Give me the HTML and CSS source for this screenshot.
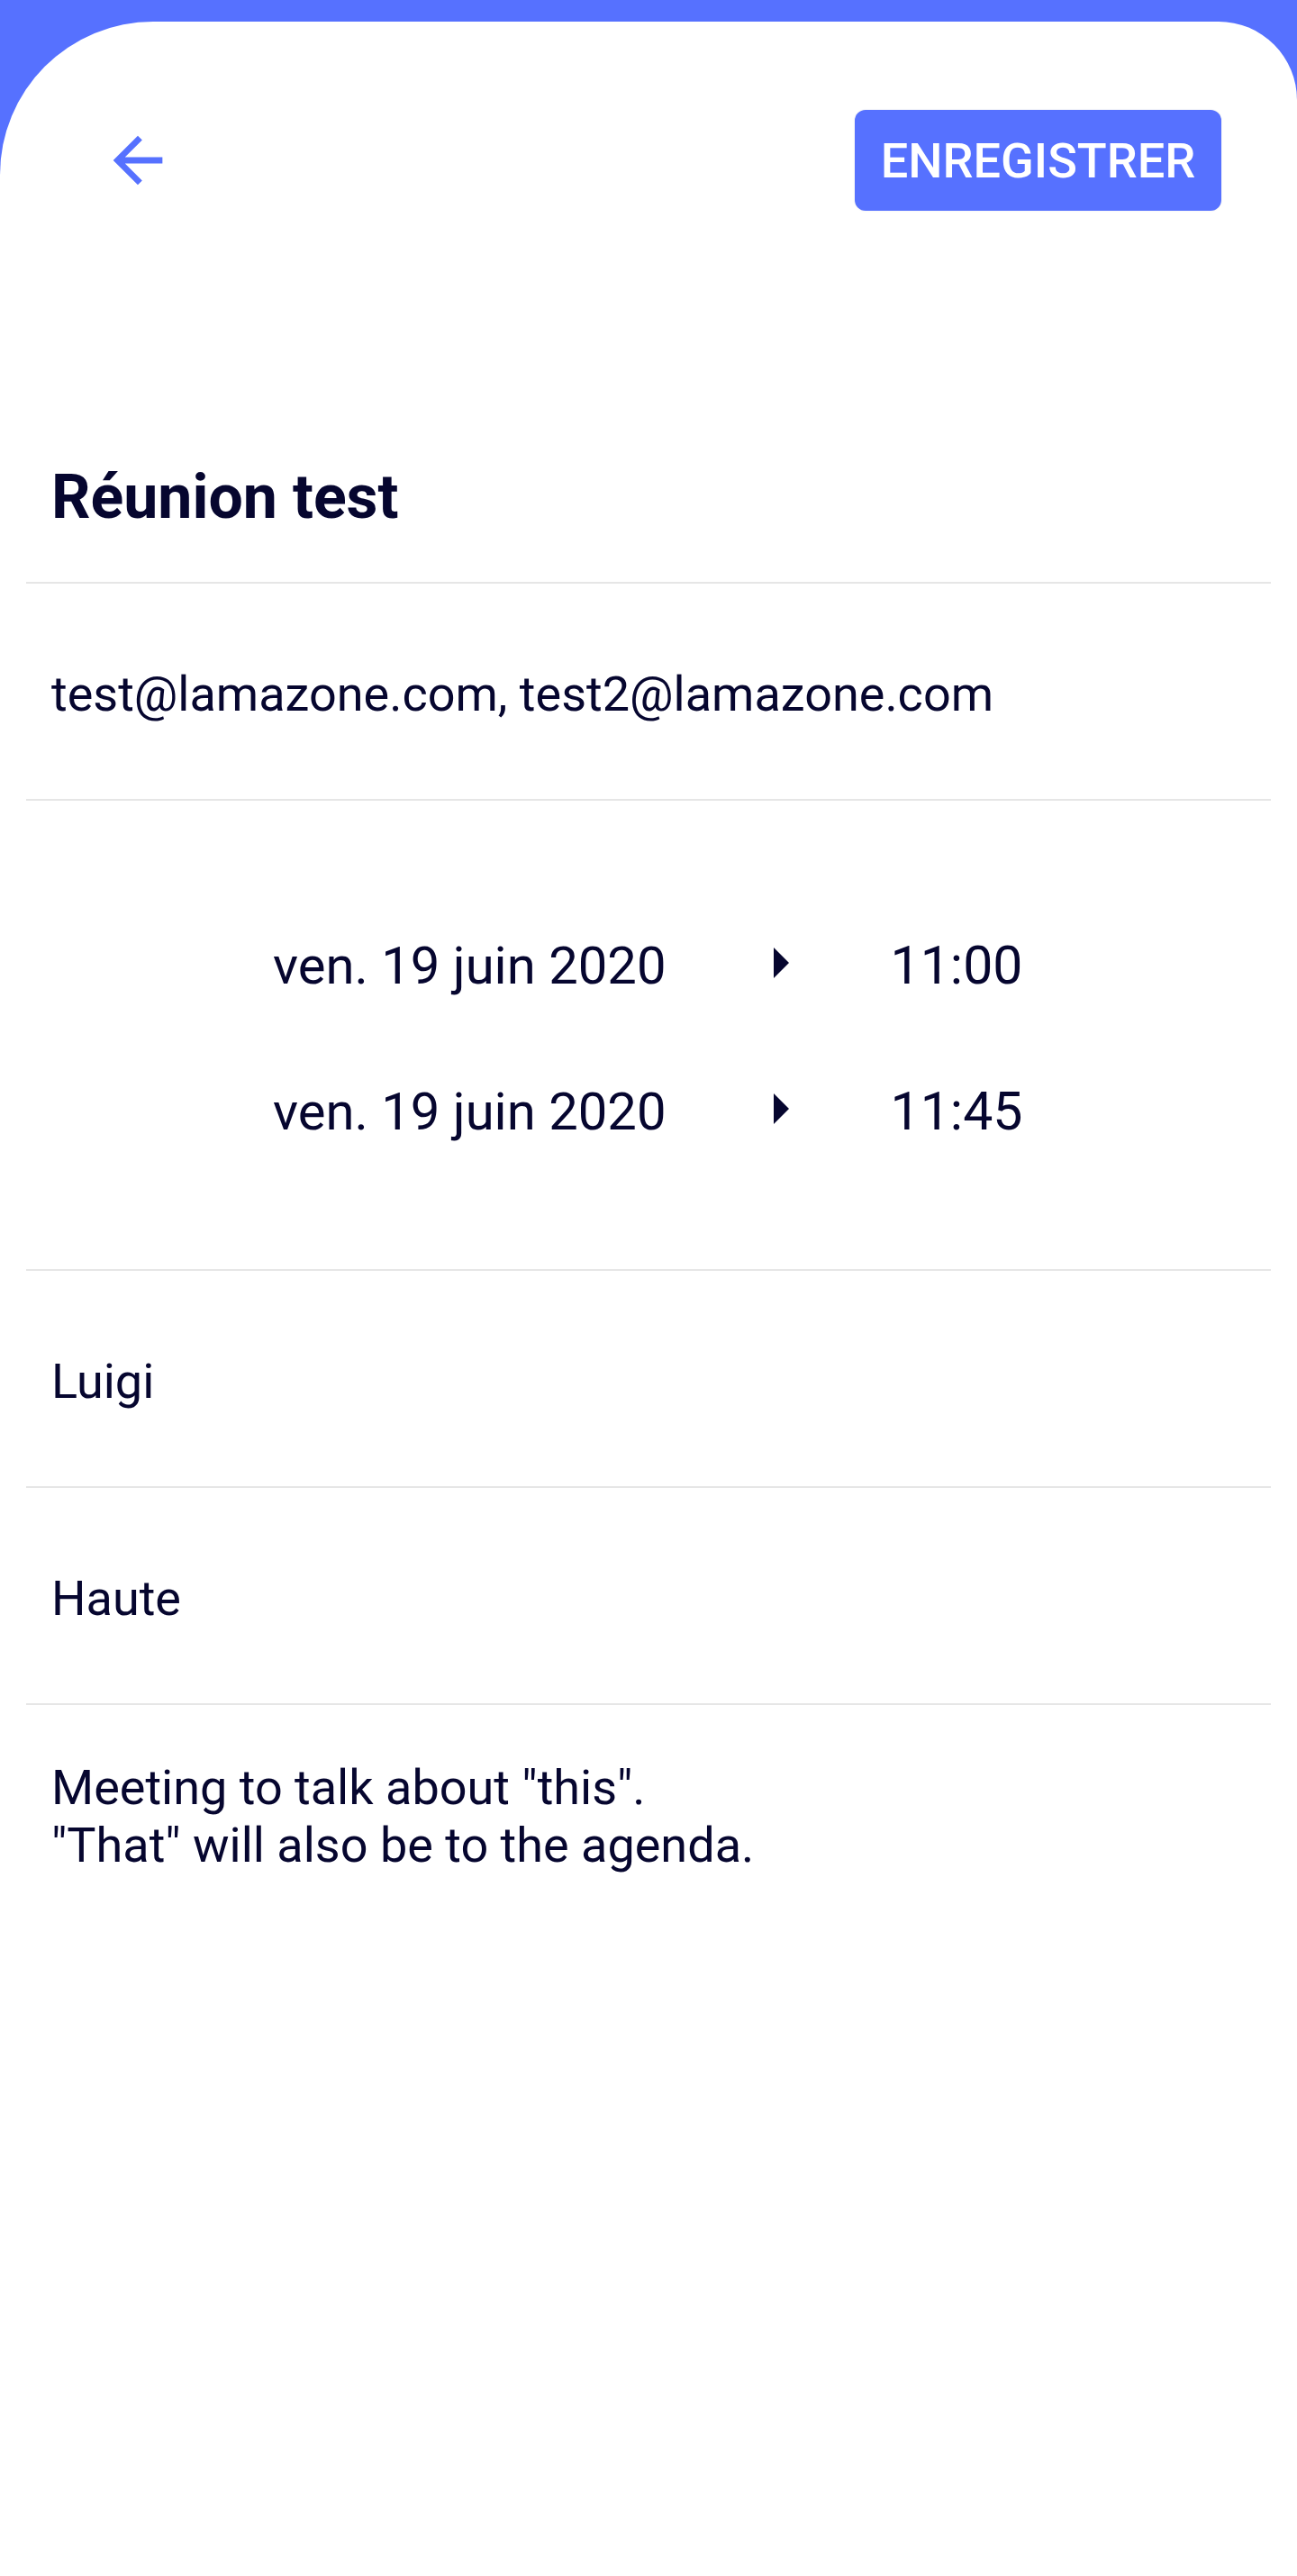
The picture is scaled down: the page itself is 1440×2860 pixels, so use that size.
FILE: index.html
```html
<!DOCTYPE html>
<html lang="fr">
<head>
<meta charset="utf-8">
<title>Réunion test</title>
<link rel="stylesheet" href="styles.css">
</head>
<body>
<main class="card">
  <header class="topbar">
    <button class="back" aria-label="Retour">
      <svg viewBox="0 0 24 24" width="82" height="82"><path d="M20 11H7.83l5.59-5.59L12 4l-8 8 8 8 1.41-1.41L7.83 13H20v-2z" fill="#5671ff"/></svg>
    </button>
    <button class="save">ENREGISTRER</button>
  </header>

  <section class="field title-field">
    <h1 class="title">Réunion test</h1>
  </section>

  <section class="field row">
    <p class="value">test@lamazone.com, test2@lamazone.com</p>
  </section>

  <section class="field dates">
    <div class="date-row">
      <span class="date">ven. 19 juin 2020</span>
      <span class="tri"></span>
      <span class="time">11:00</span>
    </div>
    <div class="date-row">
      <span class="date">ven. 19 juin 2020</span>
      <span class="tri"></span>
      <span class="time">11:45</span>
    </div>
  </section>

  <section class="field row">
    <p class="value">Luigi</p>
  </section>

  <section class="field row">
    <p class="value">Haute</p>
  </section>

  <section class="field desc">
    <p class="value">Meeting to talk about "this".<br>"That" will also be to the agenda.</p>
  </section>
</main>
</body>
</html>
```

FILE: styles.css
```css
* { box-sizing: border-box; }
html, body { margin: 0; padding: 0; }
body {
  background: #5671ff;
  font-family: Roboto, "Noto Sans", "Liberation Sans", sans-serif;
  color: #06062f;
}
.card {
  margin-top: 24px;
  background: #ffffff;
  min-height: 2836px;
  border-top-left-radius: 170px;
  border-top-right-radius: 87px;
  display: flex;
  flex-direction: column;
}
.topbar {
  display: flex;
  align-items: center;
  justify-content: space-between;
  height: 210px;
  padding: 98px 84px 0 112px;
}
.back {
  width: 82px;
  height: 82px;
  padding: 0;
  border: 0;
  background: none;
  display: flex;
}
.save {
  width: 407px;
  height: 112px;
  border: 0;
  border-radius: 12px;
  background: #5671ff;
  color: #ffffff;
  font-family: Roboto, "Noto Sans", sans-serif;
  font-weight: 500;
  font-size: 54px;
  padding: 0;
  box-shadow: 0 0 2px rgba(0, 0, 0, 0.1);
}
.field {
  margin: 0 29px;
  padding: 0 28px;
  border-bottom: 2px solid #e6e6e6;
}
.title-field {
  margin-top: 278px;
  padding-bottom: 54px;
}
.title {
  margin: 0;
  font-size: 68px;
  line-height: 80px;
  font-weight: 700;
}
.value {
  margin: 0;
  font-size: 54px;
  line-height: 64px;
  font-weight: 400;
}
.row {
  padding-top: 91px;
  padding-bottom: 84px;
}
.dates {
  padding: 149px 0 141px 274px;
  display: flex;
  flex-direction: column;
  gap: 94px;
}
.date-row {
  display: flex;
  align-items: center;
  font-size: 58px;
  line-height: 68px;
}
.time {
  font-size: 59px;
}
.tri {
  width: 0;
  height: 0;
  border-top: 17px solid transparent;
  border-bottom: 17px solid transparent;
  border-left: 17px solid #06062f;
  margin: 0 113px 6px 119px;
}
.desc {
  border-bottom: 0;
  padding-top: 60px;
}
```
